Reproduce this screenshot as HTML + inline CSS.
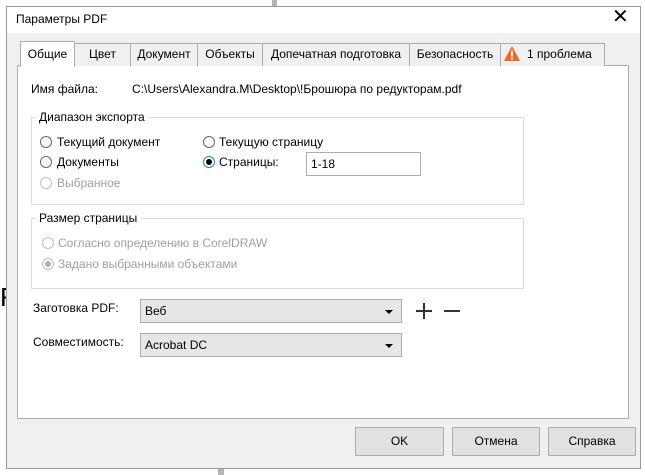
<!DOCTYPE html>
<html><head><meta charset="utf-8"><style>
*{box-sizing:border-box;margin:0;padding:0}
body{width:645px;height:475px;background:#fff;position:relative;overflow:hidden;font-family:"Liberation Sans",sans-serif;font-size:12px;color:#000}
.a{position:absolute;white-space:nowrap}
.tab{position:absolute;top:43px;height:23px;background:#f0f0f0;border:1px solid #adadad;border-bottom:none;text-align:center;line-height:21px}
.fs{position:absolute;border:1px solid #dcdcdc}
.lg{position:absolute;background:#fff;padding:0 3px;top:-8px;left:4px}
.r{position:absolute;width:12px;height:12px;border:1px solid #666;border-radius:50%;background:#fff}
.dis{color:#a0a0a0}
.r.d{border-color:#c0c0c0}
.sel{position:absolute;left:140px;width:262px;height:24px;background:#e6e6e6;border:1px solid #adadad;padding-left:4px;line-height:22px}
.sel:after{content:"";position:absolute;right:8px;top:10px;border:4px solid transparent;border-top:4px solid #000;border-bottom:none}
.btn{position:absolute;top:427px;height:29px;background:#e1e1e1;border:1px solid #adadad;text-align:center;line-height:27px}
</style></head><body>
<div class="a" style="left:272px;top:0;width:5px;height:8px;background:#b5b5b5"></div>
<div class="a" style="left:218px;top:468px;width:6px;height:7px;background:#b5b5b5"></div>
<div class="a" style="left:0;top:282px;font-size:26px;line-height:30px;color:#000">F</div>
<div class="a" style="left:6px;top:6px;width:635px;height:463px;border:1px solid #9a9a9a;background:#f0f0f0"></div>
<div class="a" style="left:7px;top:7px;width:633px;height:26px;background:#fff"></div>
<div class="a" style="left:16px;top:12px">Параметры PDF</div>
<div class="a" style="left:612px;top:4px;font-size:20px">✕</div>
<div class="a" style="left:17px;top:65px;width:612px;height:354px;background:#fff;border:1px solid #adadad"></div>
<div class="tab" style="left:74px;width:57px">Цвет</div>
<div class="tab" style="left:130px;width:68px">Документ</div>
<div class="tab" style="left:197px;width:66px">Объекты</div>
<div class="tab" style="left:262px;width:148px">Допечатная подготовка</div>
<div class="tab" style="left:409px;width:92px">Безопасность</div>
<div class="tab" style="left:500px;width:105px;text-align:left;padding-left:26px">1 проблема</div>
<svg class="a" style="left:504px;top:46px" width="16" height="15"><path d="M8 0L16 15H0Z" fill="#f26522"/><rect x="7" y="4.5" width="2" height="6" fill="#fff"/><rect x="7" y="11.5" width="2" height="2" fill="#fff"/></svg>
<div class="tab" style="left:20px;top:41px;width:55px;height:26px;background:#fff;line-height:25px">Общие</div>
<div class="a" style="left:31px;top:82px">Имя файла:</div>
<div class="a" style="left:132px;top:82px">C:\Users\Alexandra.M\Desktop\!Брошюра по редукторам.pdf</div>
<div class="fs" style="left:31px;top:117px;width:493px;height:88px"><span class="lg">Диапазон экспорта</span></div>
<div class="r" style="left:40px;top:136px"></div><div class="a" style="left:57px;top:135px">Текущий документ</div>
<div class="r" style="left:40px;top:156px"></div><div class="a" style="left:57px;top:155px">Документы</div>
<div class="r d" style="left:40px;top:177px"></div><div class="a dis" style="left:57px;top:176px">Выбранное</div>
<div class="r" style="left:203px;top:136px"></div><div class="a" style="left:219px;top:135px">Текущую страницу</div>
<div class="r" style="left:203px;top:156px;border-color:#1e7fd0"></div><div class="a" style="left:206px;top:159px;width:6px;height:6px;border-radius:50%;background:#000"></div><div class="a" style="left:219px;top:155px">Страницы:</div>
<div class="a" style="left:306px;top:152px;width:115px;height:24px;border:1px solid #adadad;padding:4px 4px">1-18</div>
<div class="fs" style="left:31px;top:218px;width:493px;height:71px"><span class="lg">Размер страницы</span></div>
<div class="r d" style="left:42px;top:237px"></div><div class="a dis" style="left:58px;top:236px">Согласно определению в CorelDRAW</div>
<div class="r d" style="left:42px;top:258px"></div><div class="a" style="left:45px;top:261px;width:6px;height:6px;border-radius:50%;background:#b0b0b0"></div><div class="a dis" style="left:58px;top:257px">Задано выбранными объектами</div>
<div class="a" style="left:33px;top:301px">Заготовка PDF:</div>
<div class="sel" style="top:299px">Веб</div>
<div class="a" style="left:416px;top:310px;width:16px;height:2px;background:#333"></div>
<div class="a" style="left:423px;top:303px;width:2px;height:16px;background:#333"></div>
<div class="a" style="left:444px;top:310px;width:16px;height:2px;background:#333"></div>
<div class="a" style="left:33px;top:335px">Совместимость:</div>
<div class="sel" style="top:333px">Acrobat DC</div>
<div class="btn" style="left:355px;width:89px">OK</div>
<div class="btn" style="left:452px;width:88px">Отмена</div>
<div class="btn" style="left:548px;width:88px">Справка</div>
</body></html>
